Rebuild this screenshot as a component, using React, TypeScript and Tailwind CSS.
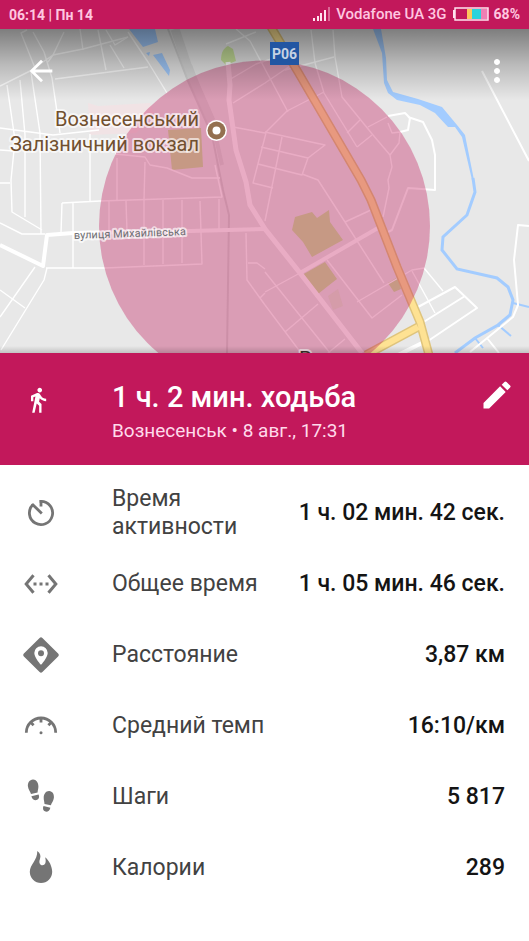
import type { ReactNode } from 'react';
import { MdArrowBack, MdDirectionsWalk, MdEdit, MdMoreVert, MdSettingsEthernet } from 'react-icons/md';

interface Stat {
  label: string;
  value: string;
  icon: ReactNode;
}

function IconBox({ children }: { children: ReactNode }) {
  return (
    <svg viewBox="0 0 36 36" className="size-9" fill="currentColor" aria-hidden="true">
      {children}
    </svg>
  );
}

const stats: Stat[] = [
  {
    label: 'Время активности',
    value: '1 ч. 02 мин. 42 сек.',
    icon: (
      <IconBox>
        <g fill="none" stroke="currentColor" strokeWidth="2.8">
          <path d="M16.6 6.4H18A11.6 11.6 0 1 1 9.8 9.8" />
          <path d="M18 5v6.6M9 9l9.8 9.4" />
        </g>
      </IconBox>
    ),
  },
  {
    label: 'Общее время',
    value: '1 ч. 05 мин. 46 сек.',
    icon: <MdSettingsEthernet className="size-9" />,
  },
  {
    label: 'Расстояние',
    value: '3,87 км',
    icon: (
      <IconBox>
        <path
          fillRule="evenodd"
          d="M16.6.9.9 16.6a2 2 0 0 0 0 2.8l15.7 15.7a2 2 0 0 0 2.8 0l15.7-15.7a2 2 0 0 0 0-2.8L19.4.9a2 2 0 0 0-2.8 0zM18 9.2a6.7 6.7 0 0 1 6.7 6.7c0 4.7-6.7 11.9-6.7 11.9s-6.7-7.2-6.7-11.9A6.7 6.7 0 0 1 18 9.2z"
        />
        <circle cx="18" cy="16.2" r="3" />
      </IconBox>
    ),
  },
  {
    label: 'Средний темп',
    value: '16:10/км',
    icon: (
      <IconBox>
        <g fill="none" stroke="currentColor" strokeWidth="2.8">
          <path d="M3.3 24.7a14.7 14.7 0 0 1 29.4 0" />
          <path d="M18 10v4.5M7.6 14.3l3 3M28.4 14.3l-3 3" />
        </g>
        <circle cx="18" cy="24.7" r="1.5" />
      </IconBox>
    ),
  },
  {
    label: 'Шаги',
    value: '5 817',
    icon: (
      <IconBox>
        <path d="M9.8.6c3.2-.3 5.5 2.8 5.6 6.6.1 2.6-.8 4-.8 6.3l-6.6 1.4c-.6-2.2-2.8-4.3-3.1-7.6C4.6 3.7 6.7.9 9.8.6z" />
        <path d="M8.4 17.2l7.2-1.6c1.1 2.5.3 5-2 5.5-2.4.5-4.5-1.2-5.2-3.9z" />
        <path d="M26.3 12c-3.2-.2-5.5 2.8-5.6 6.6-.1 2.6.7 4 .8 6.3l6.4 1.3c.6-2.1 2.6-4.1 3-7.4.4-3.7-1.5-6.6-4.6-6.8z" />
        <path d="M27.4 28.7l-6.9-1.6c-1.1 2.5-.4 5 1.9 5.5 2.4.5 4.3-1.2 5-3.9z" />
      </IconBox>
    ),
  },
  {
    label: 'Калории',
    value: '289',
    icon: (
      <IconBox>
        <path d="M14.3 1c3.1 2.2 3.8 4.9 2.6 8.2-1.3 3.4.1 6 2.5 6 2.7 0 4.2-2.7 2.7-8 4.2 3.2 7.1 9.6 7.1 14.6a11.2 11.2 0 0 1-22.4 0C6.8 14.3 14.5 10.5 14.3 1z" />
      </IconBox>
    ),
  },
];

function StatusBar() {
  return (
    <div className="flex h-[29px] items-center justify-between bg-[#c2185b] px-[9px] text-sm font-bold text-[#ffc7e0]">
      <span>06:14 | Пн 14</span>
      <div className="flex items-center gap-[6px]">
        <svg viewBox="0 0 17 16" className="h-4 w-[17px]" fill="#ffe3f0" aria-hidden="true">
          <path d="M0 12h2v3H0zM4 10h2v5H4zM7 7h2v8H7zM11 4h2v11h-2z" />
          <path d="M15 1h2v14h-2z" opacity=".4" />
        </svg>
        <span className="text-[15px] font-medium">Vodafone UA 3G</span>
        <div className="flex items-center gap-[5px]">
          <svg viewBox="0 0 36 14" className="h-3.5 w-9" aria-hidden="true">
            <path d="M0 3h2v8H0z" fill="#ffe3f0" />
            <path d="M14 2h5v10h-5z" fill="#fdc65d" />
            <path d="M19 2h9v10h-9z" fill="#29d3dc" />
            <path d="M28 2h7v10h-7z" fill="#f07fb4" />
            <rect x="2" y="1" width="33" height="12" fill="none" stroke="#ffe3f0" strokeWidth="1.5" />
          </svg>
          <span>68%</span>
        </div>
      </div>
    </div>
  );
}

function CityMap() {
  return (
    <svg
      viewBox="0 29 529 324"
      preserveAspectRatio="xMidYMid slice"
      className="block aspect-[529/324] w-full"
      role="img"
      aria-label="Карта"
    >
      <defs>
        <linearGradient id="top-shade" x1="0" y1="0" x2="0" y2="1">
          <stop offset="0" stopColor="#000" stopOpacity=".46" />
          <stop offset=".5" stopColor="#000" stopOpacity=".2" />
          <stop offset="1" stopColor="#000" stopOpacity="0" />
        </linearGradient>
        <linearGradient id="bottom-shade" x1="0" y1="0" x2="0" y2="1">
          <stop offset="0" stopColor="#000" stopOpacity="0" />
          <stop offset="1" stopColor="#000" stopOpacity=".16" />
        </linearGradient>
      </defs>
      <rect y="29" width="529" height="324" fill="#e8e8e8" />

      {/* Blocks and parks */}
      <path d="M88 103l10 3 52-3 4 12-18 18-46 2z" fill="#f1e3e5" />
      <g fill="#c8e19b">
        <path d="M221 60c0-8 3-12 7-14l5 3 3 12-10 4z" />
        <path d="M168 130l33-2 2 39-31 3z" />
        <path d="M295 217l17-5 5 6 12-8 1 12 13 18-31 17-9-15-11-12z" />
        <path d="M302 275l23-13 12 17-9 7-10 8z" />
        <path d="M388 283l10-6 3 12-7 3z" />
        <path d="M328 296l10-7 5 17-10 4z" opacity=".25" />
      </g>

      {/* Water */}
      <g fill="#a3ccff">
        <path d="M129 29h26l3 13-15 5zM146 53l4-1-1 4zM153 55l9-2 8 17-1 6z" />
        <path d="M373 29l9 24 2 30 4 10 9 7 23 5 15 8 13 14h7l7 10 10 43h2l-9-45-8-10-15-18-24-8-25-7-6-12-1-22-5-29z" />
      </g>
      <path
        d="M473 178l2 14-8 23-24 22-1 13 15 19 40 9 11 9 5 13-3 15-12 10-23 13-20 15"
        fill="none"
        stroke="#a3ccff"
        strokeWidth="3"
      />
      <path d="M513 303l16 4M498 325l13 11M475 338l8 10" fill="none" stroke="#a3ccff" strokeWidth="2" />

      {/* Railway */}
      <path d="M175 29l14 42 22 50" fill="none" stroke="#d9d9d9" strokeWidth="9" />
      <path d="M190 65l24 64 8 36" fill="none" stroke="#d9d9d9" strokeWidth="4" />
      <path d="M168 29l20 52 24 54 11 55 6 25-2 138" fill="none" stroke="#d2d2d2" strokeWidth="2" />

      {/* Streets */}
      <g fill="none" stroke="#fff" strokeWidth="1.4" strokeLinejoin="round">
        <path d="M0 86l30-15 23-16 30-6 45-12M64 32L53 55l-5 7M33 32l11 20 8 26 4 27 4 28M27 30l-6 3 14 35" />
        <path d="M80 29l3 21M98 30l8 40M110 45l14 23M55 79l93-12M128 32l20 30 19 31M106 30l9 15 13-8" />
        <path d="M7 85l8 55-4 40 1 32 30 18M20 80l5 55v82M31 72l9 61 1 101M0 128l53 7 46-5M0 183h10M0 150l14 1" />
        <path d="M90 134v67M62 203l38-2 122-4-7-32M62 203l-1 30M73 203v65M0 223l22 11h23" />
        <path d="M46 268h59l97-4-2-63M109 201v32M126 201l1 31M144 200v65M163 200v64M182 200v63M219 199v31M117 158v42M145 162l-1 38" />
        <path d="M35 267L0 317M47 268l-3 12L1 350M0 290l25 18" />
        <path d="M115 154l30 3 5 8 17 3 25 10h28" />
        <path d="M226 44l30-12M236 29l14 12 38 71M229 80l27-16 24-8M233 103l32-20 25-17M285 70l49-13" />
        <path d="M233 127l32 6M266 133l-13 50 20 5" />
        <path d="M246 233l1 47 18 25M248 263h9l8 6M260 298l5-5" />
        <path d="M265 133l22-22 37-19M311 30l4 33 9 30 33 54" />
        <path d="M333 30l2 27 7 40 31 38 17 20 2 12-4 13 1 8-6 29" />
        <path d="M265 132l60 13-17 13-47-11M282 137l-17 84M308 158l-6 17-44-11M302 174l16 6 27 42 39 61M345 222l26-12" />
        <path d="M357 147l15-12M368 127l19-10M347 133l13-13M388 123l4 10 8-1-1 11-9 12" />
        <path d="M265 292l35-19M265 272l65 81M265 305l36 48M285 332l33-28M327 260l45 58 30-23M357 302l55-32 12-2 19 23" />
        <path d="M412 271l23 42M328 353l17-14" />
      </g>
      <g fill="none" stroke="#fff" strokeWidth="2" strokeLinejoin="round">
        <path d="M388 116l17-3 5 5-2 12-8 2M408 117l15 5 9 18 3 15v35l-27-2-16 42-4 2" />
        <path d="M482 71l47 90M418 307l37-20 22 21-52 35M465 296l-43 27" />
        <path d="M529 226l-11-1-4 35 4 45-5 12-43 35M487 338l12 15" />
      </g>
      <g fill="none" stroke="#fff" strokeLinejoin="round">
        <path d="M0 245l43 21 4-31 26-2 117-2 75-2" strokeWidth="4" />
        <path d="M228 62l2 23-1 15 7 50 10 32 4 23 15 24 35 44 62 80" strokeWidth="5" />
        <path d="M300 273l78-45M396 356l26-13" strokeWidth="4" />
      </g>

      {/* Highway */}
      <g fill="none" strokeLinejoin="round">
        <path d="M366 355l52-28M271 27l27 45 63 108 10 20 26 67 23 55 9 33" stroke="#dfc47c" strokeWidth="9" />
        <path d="M366 355l52-28M271 27l27 45 63 108 10 20 26 67 23 55 9 33" stroke="#fee293" strokeWidth="6" />
      </g>

      <circle cx="264.5" cy="226" r="165.5" fill="#c2185b" fillOpacity=".36" />
      <rect y="29" width="529" height="71" fill="url(#top-shade)" />

      {/* Labels */}
      <rect x="270" y="42" width="29" height="23" fill="#2256a3" />
      <text x="284.5" y="59" textAnchor="middle" fontSize="14" fontWeight="700" fill="#c6d2e4">
        P06
      </text>
      <circle cx="216.5" cy="130.5" r="10.5" fill="#fff" />
      <circle cx="216.5" cy="130.5" r="9" fill="#947050" />
      <circle cx="216.5" cy="130.5" r="4" fill="#fff" />
      <g stroke="#fff" strokeOpacity=".65" strokeWidth="4" strokeLinejoin="round" paintOrder="stroke">
        <text textAnchor="end" fontSize="20" fill="#71502f">
          <tspan x="199" y="126">Вознесенський</tspan>
          <tspan x="199" y="151">Залізничний вокзал</tspan>
        </text>
        <text x="74" y="239" fontSize="11" fill="#6f6f73" transform="rotate(-2 74 239)">
          вулиця Михайлівська
        </text>
        <text x="299" y="366" fontSize="21" fill="#3a2f28">
          В
        </text>
      </g>
      <rect y="346" width="529" height="7" fill="url(#bottom-shade)" />
    </svg>
  );
}

export default function App() {
  return (
    <main className="min-h-screen bg-white font-['Roboto','Noto_Sans',sans-serif]">
      <StatusBar />

      <section className="relative">
        <CityMap />
        <div className="absolute inset-x-0 top-6 flex items-center justify-between pr-[14px] pl-6 text-white">
          <button type="button" aria-label="Назад">
            <MdArrowBack className="size-[34px]" />
          </button>
          <button type="button" aria-label="Ещё">
            <MdMoreVert className="size-9" />
          </button>
        </div>
      </section>

      <header className="flex items-start bg-[#c2185b] pt-6 pr-[14px] pb-5 text-white">
        <div className="w-28 shrink-0 pt-[9px] pl-6">
          <MdDirectionsWalk className="size-7" />
        </div>
        <div className="grow">
          <h1 className="text-[29px] leading-10 font-medium">1 ч. 2 мин. ходьба</h1>
          <p className="text-[19px] leading-7 text-[#ffdbeb]">Вознесенськ • 8 авг., 17:31</p>
        </div>
        <button type="button" aria-label="Изменить">
          <MdEdit className="size-9" />
        </button>
      </header>

      <div className="pt-3">
        <table className="w-full text-[23px] leading-7">
          <tbody>
            {stats.map((stat) => (
              <tr key={stat.label} className="h-[71px]">
                <td className="w-28 min-w-28 p-0 pl-[23px] text-[#757575]">{stat.icon}</td>
                <th scope="row" className="p-0 text-left font-normal text-[#424242]">
                  {stat.label}
                </th>
                <td className="p-0 pr-6 text-right font-medium whitespace-nowrap text-[#141414]">{stat.value}</td>
              </tr>
            ))}
          </tbody>
        </table>
      </div>
    </main>
  );
}
